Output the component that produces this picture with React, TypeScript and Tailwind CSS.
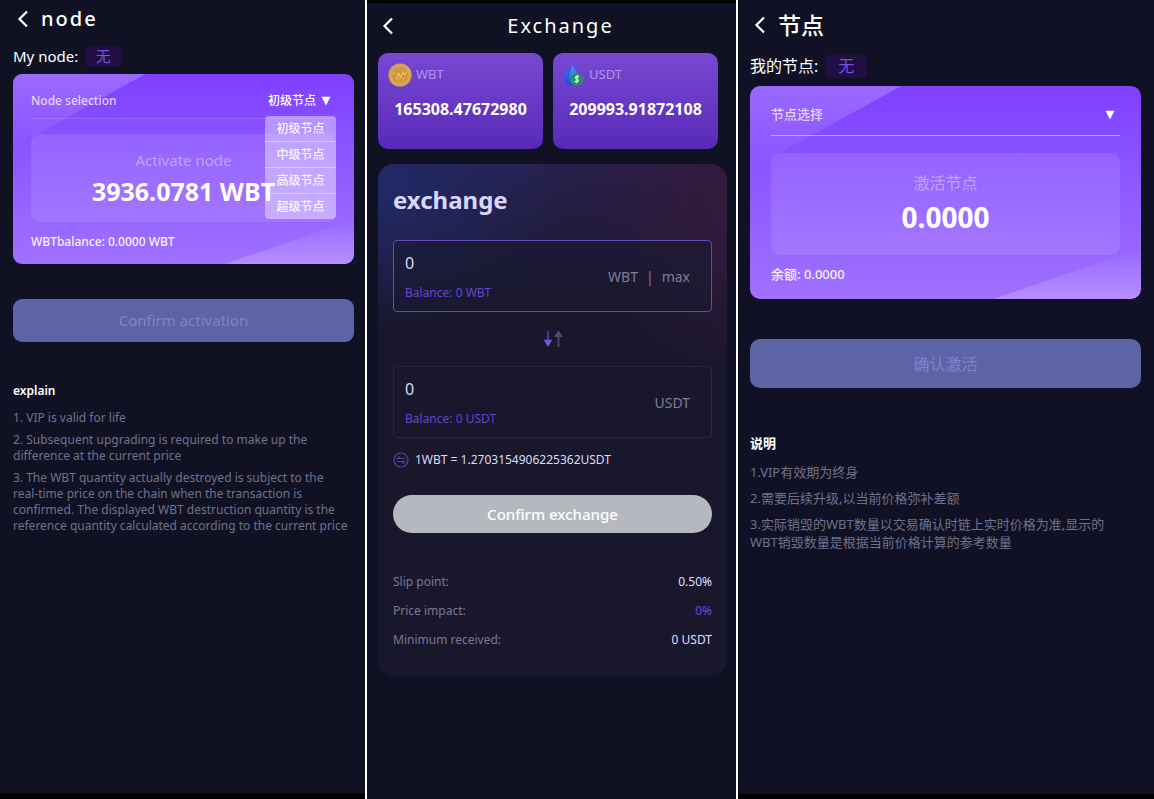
import { useState } from "react";

const LEVELS = ["初级节点", "中级节点", "高级节点", "超级节点"];

function BackIcon() {
  return (
    <svg width="12" height="18" viewBox="0 0 12 18" fill="none" stroke="currentColor" strokeWidth="2.2">
      <path d="M10 1.5 2.5 9l7.5 7.5" />
    </svg>
  );
}

function CaretIcon() {
  return (
    <svg width="10" height="10" viewBox="0 0 10 10" fill="currentColor" className="pointer-events-none">
      <path d="M0.5 0.8h9L5 9.6z" />
    </svg>
  );
}

function CoinIcon() {
  return (
    <svg width="24" height="24" viewBox="0 0 24 24">
      <defs>
        <linearGradient id="coin" x1="0" y1="0" x2="1" y2="1">
          <stop offset="0" stopColor="#c99a68" />
          <stop offset="0.5" stopColor="#dba64e" />
          <stop offset="1" stopColor="#d8a04a" />
        </linearGradient>
      </defs>
      <circle cx="12" cy="12" r="11.6" fill="url(#coin)" />
      <circle cx="12" cy="12" r="9" fill="#d0983f" stroke="#deb062" strokeWidth="0.8" />
      <path
        d="M5 9.5 8 15l2.6-5 2 4.6 2.6-5.4 1.3 3.3L19 8.5M8 15l3 1M12.6 14.6l3.4.9"
        fill="none"
        stroke="#ecc06c"
        strokeWidth="1.3"
        strokeLinejoin="round"
      />
      <path d="M6 11.5 8 15M13.5 15.5l3-3.5" fill="none" stroke="#a8701f" strokeWidth="0.8" />
    </svg>
  );
}

function DropIcon() {
  return (
    <svg width="22" height="24" viewBox="0 0 22 24">
      <defs>
        <linearGradient id="drop" x1="0" y1="0" x2="0.4" y2="1">
          <stop offset="0" stopColor="#58a0f0" />
          <stop offset="0.5" stopColor="#3f86ea" />
          <stop offset="1" stopColor="#2350d8" />
        </linearGradient>
      </defs>
      <path d="M9 1.5c1.6 4.2 6.8 8.4 6.8 13.4 0 4.2-3.2 7-7.3 7S1.2 19 1.2 15C1.2 10.3 7.2 6 9 1.5z" fill="url(#drop)" />
      <path d="M9 1.5c.4 5-3 8.5-3 13 0 3.5 1.500 6 3.500 7.300C5 22.200 1.200 19 1.200 15 1.200 10.300 7.200 6 9 1.500z" fill="#1f49cf" opacity="0.6" />
      <ellipse cx="14" cy="16.500" rx="6.700" ry="6" fill="#2a8f62" />
      <path
        d="M16 13.800c-.9-.8-3.400-.7-3.500.8-.1 1.600 3 1.300 2.800 3-.2 1.500-2.800 1.500-3.700.4M14.500 11.800l-1 8.400"
        fill="none"
        stroke="#d5f5e2"
        strokeWidth="1.300"
      />
    </svg>
  );
}

function SwapIcon() {
  return (
    <svg width="20" height="18" viewBox="0 0 20 18">
      <path d="M5 1v10" stroke="#5b41ae" strokeWidth="1.500" />
      <path d="M.8 9.800h8.400L5 17z" fill="#7a53e0" />
      <path d="M15.500 6v11" stroke="#4e4a72" strokeWidth="1.800" />
      <path d="M11 7h9l-4.500-6.500z" fill="#4e4a72" />
    </svg>
  );
}

function RateIcon() {
  return (
    <svg width="16" height="16" viewBox="0 0 16 16" fill="none" stroke="#5940a8" strokeWidth="1.200">
      <circle cx="8" cy="8" r="7" />
      <path d="M11.500 6.500H4.500L6.500 4.500M4.500 9.500h7L9.500 11.500" />
    </svg>
  );
}

// The Chinese screen is captured on a wider device, so every step is one size up.
const COMPACT = {
  panel: "border-b-6 bg-[#101224] pl-[13px] pr-[11px]",
  header: "h-[38px] pl-1 gap-3",
  title: "text-[20px] tracking-[2px]",
  status: "h-9 text-[15px] gap-[7px]",
  badge: "h-[21px] w-[36px]",
  card: "rounded-[9px] px-[18px] pt-[9px] pb-[2px]",
  selectRow: "h-9 border-white/15 text-[12px]",
  value: "mt-[15px] h-[88px] pt-4",
  caption: "text-[15px] leading-5",
  amount: "text-[25px] leading-[42px]",
  balance: "h-10 text-[12px]",
  button: "mt-[35px] h-[43px] text-[15px] rounded-[9px]",
  explain: "mt-[41px] text-[12px] leading-4",
  notes: "mt-[11px] gap-[6px] pr-1 text-[12px] leading-4",
};

const WIDE = {
  panel: "border-b-5 bg-[#101124] pl-[12px] pr-[13px]",
  header: "h-[46px] pl-1 gap-3 pt-1",
  title: "text-[23px]",
  status: "h-10 text-[16px] gap-[7px]",
  badge: "h-[23px] w-[42px]",
  card: "rounded-[10px] px-[21px] pt-[9px] pb-1",
  selectRow: "h-[41px] border-white/45 text-[13px]",
  value: "mt-[17px] h-[102px] pt-[18px]",
  caption: "text-[16px] leading-6",
  amount: "text-[28px] leading-[44px]",
  balance: "h-10 text-[13px]",
  button: "mt-10 h-[49px] text-[16px] rounded-[10px]",
  explain: "mt-[46px] text-[13px] leading-[18px]",
  notes: "mt-[11px] gap-[8px] pr-4 text-[13px] leading-[18px]",
};

type NodeScreenProps = {
  id: string;
  styles: typeof COMPACT;
  title: string;
  myNode: string;
  selectLabel: string;
  defaultLevel: string;
  menuOpen?: boolean;
  caption: string;
  amount: string;
  balance: string;
  action: string;
  explain: string;
  notes: string[];
};

function NodeScreen(props: NodeScreenProps) {
  const { styles: s } = props;
  const [level, setLevel] = useState(props.defaultLevel);

  return (
    <section className={`border-black text-white ${s.panel}`}>
      <header className={`flex items-center ${s.header}`}>
        <button type="button" aria-label="Back">
          <BackIcon />
        </button>
        <h1 className={`font-medium leading-none ${s.title}`}>{props.title}</h1>
      </header>
      <div className={`flex items-center ${s.status}`}>
        <span>{props.myNode}</span>
        <span className={`flex items-center justify-center rounded bg-[#200f42] text-[#7a4ce0] ${s.badge}`}>无</span>
      </div>

      <div className={`relative overflow-hidden bg-linear-to-b from-[#7f3fff] to-[#a070ff] ${s.card}`}>
        <svg className="absolute inset-0 size-full" viewBox="0 0 341 190" preserveAspectRatio="none">
          <defs>
            <linearGradient id={`${props.id}-a`} x1="0" y1="0" x2="0" y2="1">
              <stop offset="0" stopColor="#fff" stopOpacity="0.22" />
              <stop offset="1" stopColor="#fff" stopOpacity="0" />
            </linearGradient>
            <linearGradient id={`${props.id}-b`} x1="0" y1="0" x2="0" y2="1">
              <stop offset="0" stopColor="#fff" stopOpacity="0" />
              <stop offset="1" stopColor="#fff" stopOpacity="0.22" />
            </linearGradient>
          </defs>
          <path d="M0 0h132L0 74z" fill={`url(#${props.id}-a)`} />
          <path d="M341 145v45H212z" fill={`url(#${props.id}-b)`} />
        </svg>

        <div className={`relative z-10 flex items-center justify-between border-b font-medium ${s.selectRow}`}>
          <label htmlFor={props.id} className="text-white/75">
            {props.selectLabel}
          </label>
          <div className="flex items-center gap-1 pr-[5px]">
            <select
              id={props.id}
              value={level}
              onChange={(e) => setLevel(e.target.value)}
              className="appearance-none bg-transparent outline-none"
            >
              {level === "" && <option value="" />}
              {LEVELS.map((name) => (
                <option key={name} className="text-black">
                  {name}
                </option>
              ))}
            </select>
            <CaretIcon />
          </div>
          {props.menuOpen && (
            <ul className="absolute right-0 top-[33px] w-[71px] divide-y divide-white/40 overflow-hidden rounded bg-white/40 text-white/90">
              {LEVELS.map((name) => (
                <li key={name}>
                  <button type="button" onClick={() => setLevel(name)} className="block h-[25px] w-full pt-px">
                    {name}
                  </button>
                </li>
              ))}
            </ul>
          )}
        </div>

        <div className={`relative rounded-[9px] bg-white/10 text-center ${s.value}`}>
          <p className={`text-white/40 ${s.caption}`}>{props.caption}</p>
          <p className={`font-bold ${s.amount}`}>{props.amount}</p>
        </div>
        <p className={`relative flex items-center font-medium text-white/90 ${s.balance}`}>{props.balance}</p>
      </div>

      <button type="button" className={`w-full bg-[#5c64a5] text-[#8082d0] ${s.button}`}>
        {props.action}
      </button>

      <h2 className={`font-semibold ${s.explain}`}>{props.explain}</h2>
      <div className={`flex flex-col text-[#70718a] ${s.notes}`}>
        {props.notes.map((note) => (
          <p key={note}>{note}</p>
        ))}
      </div>
    </section>
  );
}

function TokenCard({ icon, name, amount }: { icon: React.ReactNode; name: string; amount: string }) {
  return (
    <div className="h-24 rounded-[10px] bg-linear-to-b from-[#7748d2] to-[#5829b8] px-[10px] pt-[10px]">
      <div className="flex h-6 items-center gap-1 text-[13px] text-[#b594f0]">
        {icon}
        {name}
      </div>
      <p className="mt-[10px] text-center text-[16px] font-bold leading-6">{amount}</p>
    </div>
  );
}

type AmountBoxProps = {
  id: string;
  token: string;
  className: string;
  children: React.ReactNode;
};

function AmountBox({ id, token, className, children }: AmountBoxProps) {
  const [value, setValue] = useState("0");

  return (
    <div className={`flex h-[72px] items-center justify-between rounded border pl-[11px] pr-[21px] ${className}`}>
      <div className="pt-[2px]">
        <input
          id={id}
          aria-label={`${token} amount`}
          value={value}
          onChange={(e) => setValue(e.target.value)}
          className="block h-6 w-[120px] bg-transparent text-[16px] text-[#dcd8fa] outline-none"
        />
        <label htmlFor={id} className="mt-2 block text-[12px] leading-5 text-[#6542d0]">
          Balance: 0 {token}
        </label>
      </div>
      <div className="flex gap-2 text-[14px] text-[#807b98]">{children}</div>
    </div>
  );
}

function ExchangeScreen() {
  return (
    <section className="border-t-3 border-black bg-[#101123] pl-[11px] pr-[9px] text-white">
      <header className="flex h-[50px] items-center pb-1 pl-1">
        <button type="button" aria-label="Back">
          <BackIcon />
        </button>
        <h1 className="flex-1 text-center text-[20px] leading-none tracking-[2px]">Exchange</h1>
      </header>

      <div className="grid grid-cols-2 gap-[10px] pr-[9px]">
        <TokenCard icon={<CoinIcon />} name="WBT" amount="165308.47672980" />
        <TokenCard icon={<DropIcon />} name="USDT" amount="209993.91872108" />
      </div>

      <div className="mt-[15px] h-[512px] rounded-[16px] bg-[#19172c] bg-[radial-gradient(ellipse_200px_150px_at_0%_3%,#202968_0%,#20296800_100%),radial-gradient(ellipse_140px_170px_at_100%_8%,#331a3b_0%,#331a3b00_100%),linear-gradient(#281f4a_0px,#281f4a00_150px)] px-[15px] pt-[18px]">
        <h2 className="text-[24px] font-bold leading-9 text-[#dad6fb]">exchange</h2>
        <AmountBox id="from" token="WBT" className="mt-[22px] border-[#6748b8] bg-[#191930]/60">
          <span>WBT</span>
          <span>|</span>
          <button type="button">max</button>
        </AmountBox>
        <div className="flex h-[54px] items-center justify-center">
          <button type="button" aria-label="Swap direction">
            <SwapIcon />
          </button>
        </div>
        <AmountBox id="to" token="USDT" className="border-[#292739]">
          <span>USDT</span>
        </AmountBox>

        <p className="mt-3 flex h-5 items-center gap-[6px] text-[12px] text-[#d9dcf5]">
          <RateIcon />
          1WBT = 1.2703154906225362USDT
        </p>
        <button type="button" className="mt-[25px] h-[38px] w-full rounded-full bg-[#b6b8bf] text-[15px] font-medium">
          Confirm exchange
        </button>

        <dl className="mt-[34px] grid grid-cols-[auto_auto] justify-between text-[12px] leading-[29px] text-[#7b7796]">
          <dt>Slip point:</dt>
          <dd className="text-right text-[#e2dffa]">0.50%</dd>
          <dt>Price impact:</dt>
          <dd className="text-right text-[#7048e0]">0%</dd>
          <dt>Minimum received:</dt>
          <dd className="text-right text-[#e2dffa]">0 USDT</dd>
        </dl>
      </div>
    </section>
  );
}

export default function App() {
  return (
    <main className="grid min-h-screen grid-cols-[365fr_369fr_416fr] gap-[2px] bg-white font-['Noto_Sans','Noto_Sans_CJK_SC',sans-serif]">
      <NodeScreen
        id="level-en"
        styles={COMPACT}
        title="node"
        myNode="My node:"
        selectLabel="Node selection"
        defaultLevel="初级节点"
        menuOpen
        caption="Activate node"
        amount="3936.0781 WBT"
        balance="WBTbalance: 0.0000 WBT"
        action="Confirm activation"
        explain="explain"
        notes={[
          "1. VIP is valid for life",
          "2. Subsequent upgrading is required to make up the difference at the current price",
          "3. The WBT quantity actually destroyed is subject to the real-time price on the chain when the transaction is confirmed. The displayed WBT destruction quantity is the reference quantity calculated according to the current price",
        ]}
      />
      <ExchangeScreen />
      <NodeScreen
        id="level-zh"
        styles={WIDE}
        title="节点"
        myNode="我的节点:"
        selectLabel="节点选择"
        defaultLevel=""
        caption="激活节点"
        amount="0.0000"
        balance="余额: 0.0000"
        action="确认激活"
        explain="说明"
        notes={[
          "1.VIP有效期为终身",
          "2.需要后续升级,以当前价格弥补差额",
          "3.实际销毁的WBT数量以交易确认时链上实时价格为准,显示的WBT销毁数量是根据当前价格计算的参考数量",
        ]}
      />
    </main>
  );
}
